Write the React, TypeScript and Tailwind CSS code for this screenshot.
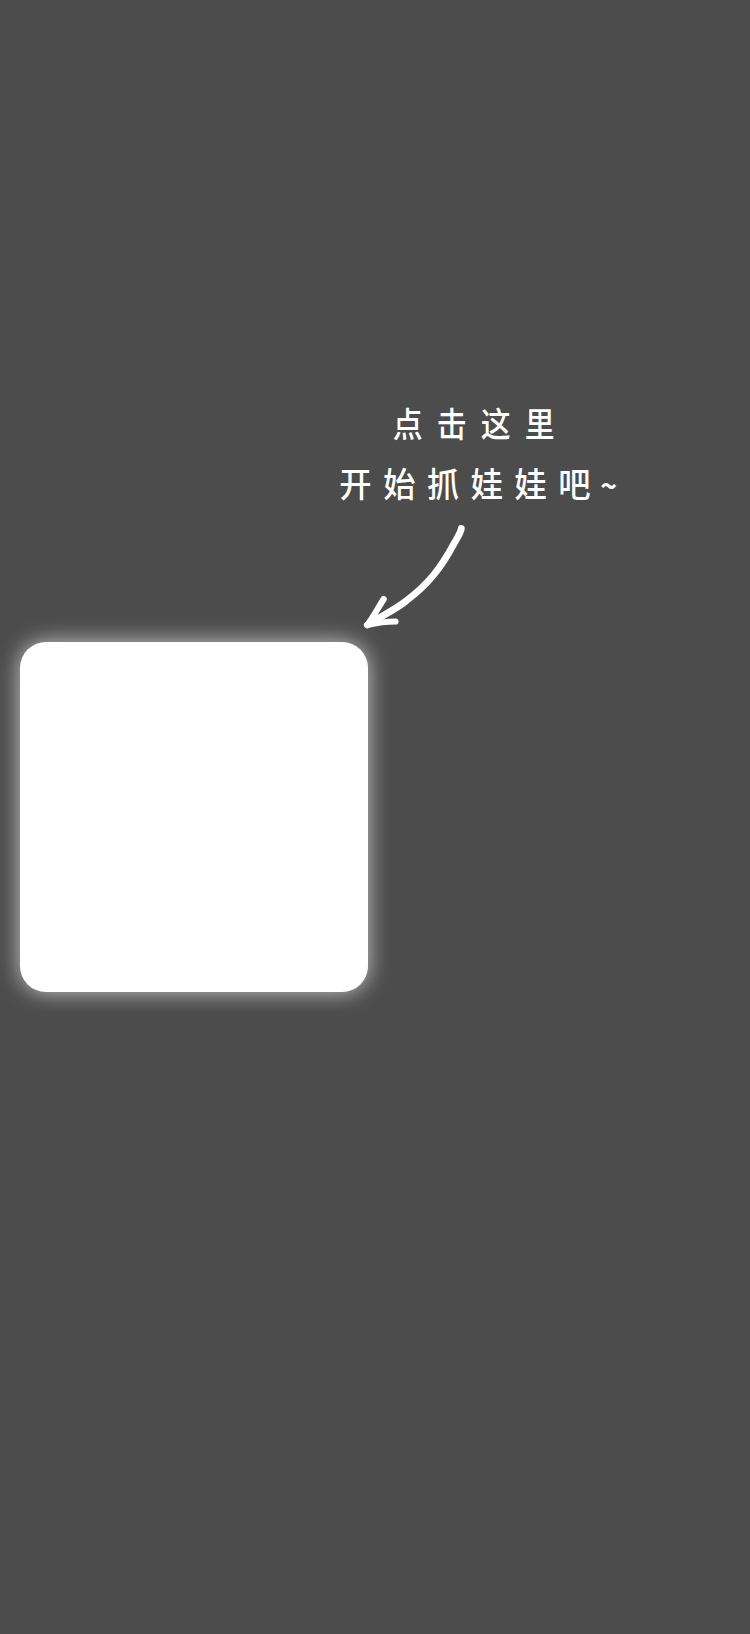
function Hint() {
  return (
    <div className="flex w-[290px] flex-col items-center font-['Noto_Sans_CJK_SC',sans-serif] text-[34px] leading-[60px] font-medium whitespace-nowrap text-white">
      <p className="h-[60px] scale-x-[0.88] pl-[3px] tracking-[16px]">点击这里</p>
      <p className="h-[60px] scale-x-[0.95] pr-[2px] tracking-[12.1px]">
        开始抓娃娃吧<span className="-ml-[2px] text-[30px] font-bold tracking-normal">~</span>
      </p>
    </div>
  );
}

function Arrow() {
  return (
    <svg
      className="h-[110px] w-[110px]"
      viewBox="0 0 110 110"
      fill="none"
      stroke="#fff"
      strokeLinecap="round"
      strokeLinejoin="round"
    >
      <path d="M101.3 8.5C100.8 13 96.5 19 93.5 24.5C82 46 69 64 46 81C35 90 21 96 7.3 105" strokeWidth="6.8" />
      <path d="M23.7 79C18 88 14 96 7.3 105C16 103 25 101.5 35.5 101.5" strokeWidth="6.2" />
    </svg>
  );
}

export default function App() {
  return (
    <main className="h-[1634px] w-[750px] overflow-hidden bg-[#4c4c4c]">
      <div className="pt-[393px] pl-[334px]">
        <Hint />
      </div>
      <div className="h-[129px] pt-[7px] pl-[360px]">
        <Arrow />
      </div>
      <button
        type="button"
        aria-label="开始抓娃娃"
        className="ml-5 block h-[350px] w-[348px] rounded-[26px] bg-white shadow-[0_0_22px_rgba(255,255,255,0.7)]"
      />
    </main>
  );
}
